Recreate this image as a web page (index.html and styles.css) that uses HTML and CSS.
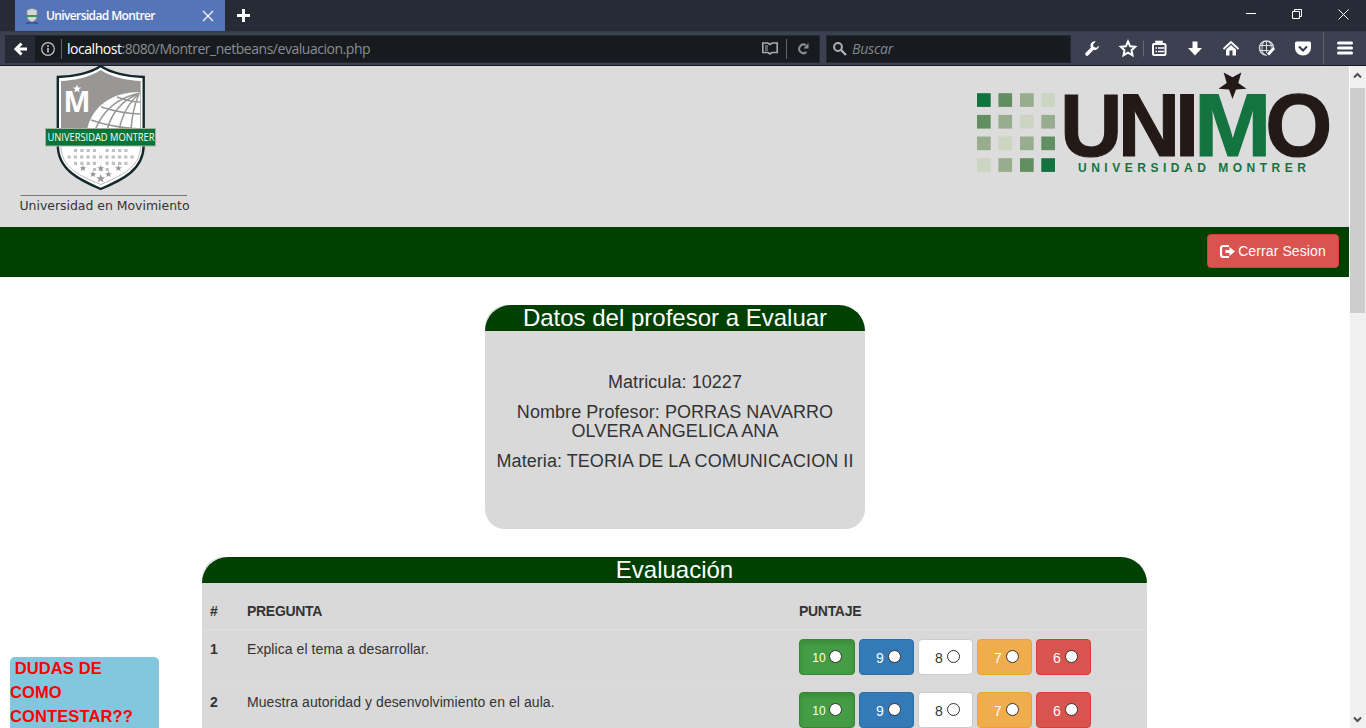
FILE: index.html
```html
<!DOCTYPE html>
<html lang="es">
<head>
<meta charset="utf-8">
<title>Universidad Montrer</title>
<link rel="stylesheet" href="styles.css">
</head>
<body>
<div class="tabbar">
  <div class="tab">
    <svg class="favicon" width="14" height="16" viewBox="0 0 14 16"><path d="M2 2l5-1.500L12 2v6c0 3-2 5-5 6-3-1-5-3-5-6z" fill="#d5d5d5" stroke="#888" stroke-width=".6"/><path d="M1 7h12v2H1z" fill="#2a9b55"/><path d="M1 15h12" stroke="#26406f" stroke-width="1"/></svg>
    <span class="tab-title">Universidad Montrer</span>
    <svg class="tab-close" width="12" height="12" viewBox="0 0 12 12"><path d="M1 1l10 10M11 1L1 11" stroke="#fff" stroke-width="1.200"/></svg>
  </div>
  <svg class="newtab" width="13" height="13" viewBox="0 0 13 13"><path d="M6.500 0v13M0 6.500h13" stroke="#fff" stroke-width="3"/></svg>
  <div class="window-controls">
    <svg width="10" height="11" viewBox="0 0 10 11"><path d="M0 4.500h10" stroke="#fff"/></svg>
    <svg width="10" height="11" viewBox="0 0 10 11"><path d="M.5 2.500h7v7h-7zM2.500 2.500v-2h7v7h-2" fill="none" stroke="#fff"/></svg>
    <svg width="11" height="11" viewBox="0 0 11 11"><path d="M.5.5l10 10M10.500.5l-10 10" stroke="#fff"/></svg>
  </div>
</div>
<div class="toolbar">
  <div class="urlbar">
    <div class="back"><svg width="13" height="14" viewBox="0 0 13 14"><path d="M7.500 1.500L2 7l5.500 5.500M2 7h11" fill="none" stroke="#fff" stroke-width="3"/></svg></div>
    <svg class="info" width="14" height="14" viewBox="0 0 14 14"><circle cx="7" cy="7" r="6.300" fill="none" stroke="#c8c8c8" stroke-width="1.200"/><path d="M7 6v4.500M7 3.300v1.600" stroke="#d5d5d5" stroke-width="1.500"/></svg>
    <span class="divider"></span>
    <span class="url"><b>localhost</b>:8080/Montrer_netbeans/evaluacion.php</span>
    <svg class="reader" width="16" height="13" viewBox="0 0 16 13"><path d="M.8 1h5L8 2.500 10.200 1h5v9.500H10L8 12l-2-1.500H.8z" fill="none" stroke="#a9aaac" stroke-width="1.600"/><path d="M3 4h3M3 6h3M3 8h3" stroke="#a9aaac"/></svg>
    <span class="divider reload-divider"></span>
    <svg class="reload" width="12" height="13" viewBox="0 0 12 13"><path d="M8.800 3.200A4.300 4.300 0 1 0 9.500 10" fill="none" stroke="#8e8f91" stroke-width="2"/><path d="M11.500 1v5.500H6.500z" fill="#8e8f91"/></svg>
  </div>
  <div class="search">
    <svg width="14" height="14" viewBox="0 0 14 14"><circle cx="5" cy="5" r="3.900" fill="none" stroke="#b0b1b3" stroke-width="2"/><path d="M8 8l5 5" stroke="#b0b1b3" stroke-width="2.400"/></svg>
    <span>Buscar</span>
  </div>
  <svg class="toolbar-icons" width="295" height="34" viewBox="1071 31.500 295 34">
    <path d="M1087 53.500l5-5" stroke="#fff" stroke-width="3.600" stroke-linecap="round"/><path d="M1095.800 41a4.300 4.300 0 1 0 3.200 4l-2.500 2.200-2.900-.8-.5-2.600z" fill="#fff"/>
    <path d="M1128 41l2.200 4.800 5 .5-3.700 3.500 1 5-4.500-2.600-4.500 2.600 1-5-3.700-3.500 5-.5z" fill="none" stroke="#fff" stroke-width="2"/>
    <path d="M1143.500 40v16" stroke="#656a77"/>
    <rect x="1153" y="43.500" width="12.500" height="11" rx="1" fill="none" stroke="#fff" stroke-width="2"/><path d="M1156 42.500h6v-1.500h-6z" stroke="#fff" stroke-width="1.600"/><path d="M1155.500 47.500h1.500m1 0h6M1155.500 51h1.500m1 0h6" stroke="#fff" stroke-width="1.500"/>
    <path d="M1192.500 41h5v6.500h4.500l-7 7.500-7-7.500h4.500z" fill="#fff"/>
    <path d="M1223.500 48.500l7.500-7 7.500 7" fill="none" stroke="#fff" stroke-width="1.800"/><path d="M1226 49l5-4.500 5 4.500v6h-3.500v-5h-3v5H1226z" fill="#fff"/>
    <circle cx="1266.500" cy="47.500" r="7" fill="none" stroke="#ddd" stroke-width="1.500"/><path d="M1266.500 41v14M1260 45h13M1260 50h13M1263.500 41.500c-2 5-2 8 0 12M1269.500 41.500c2 4 2 5 1.500 6" fill="none" stroke="#ddd"/><path d="M1267 55l7-7" stroke="#3b4150" stroke-width="4.500"/><path d="M1268 54l6-6.500" stroke="#fff" stroke-width="3"/>
    <path d="M1295 42.500q0-1.500 1.500-1.500h13q1.500 0 1.500 1.500v5a8 7.500 0 0 1-16 0z" fill="#fff"/><path d="M1299 46l4 4 4-4" fill="none" stroke="#343a48" stroke-width="2"/>
    <path d="M1323.500 32v32" stroke="#5d6370"/>
    <path d="M1338.500 42.500h13M1338.500 47.500h13M1338.500 52.500h13" stroke="#fff" stroke-width="3" stroke-linecap="round"/>
  </svg>
</div>
<div class="viewport">
  <main class="page">
    <header class="banner">
      <svg class="crest" width="174" height="148" viewBox="18 66 174 148">
        <path d="M100.700 66C91 73 72 77 57.800 77v68c0 25 22 35 42.900 44 21.300-9 43-19 43-44V77c-14.500 0-33.200-4-43-11z" fill="#fff" stroke="#14282c" stroke-width="2.400"/>
        <path d="M100.700 70C91 77 74 80.500 61 81v49h79.700V81c-13-.5-30-4-40-11z" fill="#999795"/>
        <path d="M87 130c4-21 22-38 53-38v38z" fill="#fff"/>
        <g fill="none" stroke="#999795" stroke-width="1.500"><path d="M95 130c7-17 20-32 45-37M107 130c4-15 14-29 31-36M119 130c3-14 8-26 20-36M131 130c1-16 4-27 8-36M101 107c13 4 25 7 39 7M91 120c14 5 30 8 49 9M117 97c8 3 15 5 23 5"/></g>
        <path d="M61 147c1 22 20 29 39.700 37.500C120 176 140 168 140.700 147" fill="none" stroke="#aaa" stroke-width=".8"/>
        <text class="crest-letter" x="63.500" y="112" textLength="27" lengthAdjust="spacingAndGlyphs">M</text>
        <path d="M77 84.500l1.100 3h3.200l-2.500 2 .9 3.100-2.700-1.800-2.700 1.800.9-3.100-2.500-2h3.200z" fill="#fff"/>
        <g stroke="#c0c0c0" stroke-width="3.200" stroke-dasharray="3.200 3.100"><path d="M74 150.500h22M105.500 150.500h22M67.500 157h67M74 163.300h22M105.500 163.300h22M93 169.500h16"/></g>
        <g fill="#999"><path id="small-star" d="M83 165l1 2.200h2.400l-1.900 1.500.7 2.400-2.200-1.400-2.200 1.400.7-2.400-1.900-1.500h2.400z"/><use href="#small-star" x="17.700"/><use href="#small-star" x="35.500"/><use href="#small-star" x="10" y="6"/><use href="#small-star" x="25.500" y="6"/><path d="M100.700 174l1.200 3.200h3.300l-2.600 2 1 3.200-2.900-1.900-2.900 1.900 1-3.200-2.600-2h3.300z"/></g>
        <rect x="45.500" y="128.500" width="110" height="17.500" fill="#087538" stroke="#a5b3a4"/>
        <text class="crest-band" x="47.500" y="141.300" textLength="107" lengthAdjust="spacingAndGlyphs">UNIVERSIDAD MONTRER</text>
        <path d="M20.500 195.500h166.500" stroke="#777" stroke-width="1.200"/>
        <text class="crest-motto" x="19.500" y="209.500" textLength="170" lengthAdjust="spacingAndGlyphs">Universidad en Movimiento</text>
      </svg>
      <svg class="unimo" width="356" height="104" viewBox="976 71 356 104">
        <g fill="#117440"><rect x="977" y="93.200" width="13.700" height="13.700"/><rect x="1041.300" y="158.200" width="13.700" height="13.700"/></g>
        <g fill="#628f62"><rect x="998.400" y="93.200" width="13.700" height="13.700"/><rect x="977" y="114.900" width="13.700" height="13.700"/><rect x="1041.300" y="136.500" width="13.700" height="13.700"/><rect x="1020" y="158.200" width="13.700" height="13.700"/></g>
        <g fill="#98ad8e"><rect x="1020" y="93.200" width="13.700" height="13.700"/><rect x="998.400" y="114.900" width="13.700" height="13.700"/><rect x="1041.300" y="114.900" width="13.700" height="13.700"/><rect x="977" y="136.500" width="13.700" height="13.700"/><rect x="1020" y="136.500" width="13.700" height="13.700"/><rect x="998.400" y="158.200" width="13.700" height="13.700"/></g>
        <g fill="#cbd5c2"><rect x="1041.300" y="93.200" width="13.700" height="13.700"/><rect x="1020" y="114.900" width="13.700" height="13.700"/><rect x="998.400" y="136.500" width="13.700" height="13.700"/><rect x="977" y="158.200" width="13.700" height="13.700"/></g>
        <g class="wordmark"><text x="1060" y="155.800" textLength="62.500" lengthAdjust="spacingAndGlyphs">U</text><text x="1117.700" y="155.800" textLength="62.500" lengthAdjust="spacingAndGlyphs">N</text><text x="1174.800" y="155.800">I</text><text class="wordmark-m" x="1194" y="155.800" textLength="77.500" lengthAdjust="spacingAndGlyphs">M</text><text x="1265.200" y="155.800" textLength="67" lengthAdjust="spacingAndGlyphs">O</text></g>
        <path d="M1232.500 99l-3.500-9.500-10.500-.7 8.200-5.800-3-10.500 8.800 4.800 8.800-4.800-3 10.500 8.200 5.800-10.500.7z" fill="#231a17"/>
        <text class="wordmark-sub" x="1078" y="171.700" textLength="228">UNIVERSIDAD MONTRER</text>
      </svg>
    </header>
    <nav class="navbar">
      <button class="logout"><svg width="15" height="13" viewBox="0 0 15 13"><path d="M9 1H3.500Q1 1 1 3.500v6Q1 12 3.500 12H9" fill="none" stroke="#fff" stroke-width="2.200"/><path d="M5.500 5h4V2L15 6.500 9.500 11V8h-4z" fill="#fff"/></svg>Cerrar Sesion</button>
    </nav>
    <section class="teacher">
      <h3 class="panel-title">Datos del profesor a Evaluar</h3>
      <h4>Matricula: 10227</h4>
      <h4>Nombre Profesor: PORRAS NAVARRO<br>OLVERA ANGELICA ANA</h4>
      <h4>Materia: TEORIA DE LA COMUNICACION II</h4>
    </section>
    <section class="evaluation">
      <h3 class="panel-title">Evaluación</h3>
      <div class="row head"><b>#</b><b>PREGUNTA</b><b>PUNTAJE</b></div>
      <div class="row">
        <b>1</b><span>Explica el tema a desarrollar.</span>
        <div class="scores"><label class="score s10">10<i></i></label><label class="score s9">9<i></i></label><label class="score s8">8<i></i></label><label class="score s7">7<i></i></label><label class="score s6">6<i></i></label></div>
      </div>
      <div class="row ruled">
        <b>2</b><span>Muestra autoridad y desenvolvimiento en el aula.</span>
        <div class="scores"><label class="score s10">10<i></i></label><label class="score s9">9<i></i></label><label class="score s8">8<i></i></label><label class="score s7">7<i></i></label><label class="score s6">6<i></i></label></div>
      </div>
    </section>
    <aside class="help">&nbsp;DUDAS DE<br>COMO<br>CONTESTAR??</aside>
  </main>
  <div class="scrollbar">
    <svg width="16" height="22" viewBox="0 0 16 22"><path d="M4 11.500L7.500 8l3.500 3.500" fill="none" stroke="#505050" stroke-width="2"/></svg>
    <div class="thumb"></div>
    <svg class="scroll-down" width="16" height="17" viewBox="0 0 16 17"><path d="M4 6.500L7.500 10 11 6.500" fill="none" stroke="#505050" stroke-width="2"/></svg>
  </div>
</div>
</body>
</html>
```
FILE: styles.css
```css
* { box-sizing: border-box; }
body {
  margin: 0;
  width: 1366px;
  height: 728px;
  overflow: hidden;
  display: flex;
  flex-direction: column;
  font-family: "Liberation Sans", Arial, sans-serif;
  font-size: 14px;
  line-height: 20px;
  color: #333;
}
svg { display: block; flex: none; overflow: visible; }

.tabbar {
  height: 31px;
  flex: none;
  display: flex;
  align-items: center;
  padding-left: 15px;
  background: #272b35;
}
.tab {
  width: 210px;
  height: 31px;
  display: flex;
  align-items: center;
  padding: 0 11px 0 10px;
  background: #5675b9;
  color: #fff;
  font: 600 12px "Open Sans", "Noto Sans", sans-serif;
}
.tab-title { margin-left: 7px; letter-spacing: -0.62px; white-space: nowrap; }
.tab-close { margin-left: auto; }
.newtab { margin-left: 12px; }
.window-controls { margin-left: auto; display: flex; gap: 36px; padding: 0 17px 3px 0; }

.toolbar {
  height: 35px;
  flex: none;
  display: flex;
  align-items: center;
  padding-left: 5px;
  background: #3b4150;
  border-top: 1px solid #343946;
  border-bottom: 1px solid #191c25;
  font-family: "Open Sans", "Noto Sans", sans-serif;
}
.urlbar, .search {
  height: 28px;
  display: flex;
  align-items: center;
  background: #171b1f;
  border: 1px solid #242933;
}
.urlbar { width: 815px; }
.back { width: 29px; height: 26px; padding: 6px 0 0 8px; background: #252b34; }
.info { margin-left: 6px; }
.divider { width: 1px; height: 20px; margin-left: 6px; background: #62666c; }
.url { margin-left: 5px; font-size: 14px; letter-spacing: -0.47px; color: #8b8d90; white-space: nowrap; }
.url b { font-weight: 400; color: #fff; }
.reader { margin-left: auto; }
.reload-divider { margin-left: 8px; }
.reload { margin: 0 10px; }
.search {
  width: 245px;
  margin-left: 6px;
  padding-left: 6px;
  gap: 5px;
  font-size: 14px;
  font-style: italic;
  letter-spacing: -0.2px;
  color: #85878a;
}

.viewport { height: 662px; flex: none; display: flex; }
.page { width: 1349px; height: 662px; overflow: hidden; position: relative; background: #fff; }
.scrollbar { width: 17px; display: flex; flex-direction: column; border-left: 1px solid #fff; background: #f0f0f0; }
.thumb { width: 15px; height: 225px; background: #cdcdcd; }
.scroll-down { margin-top: auto; }

.banner { height: 161px; display: flex; justify-content: space-between; padding: 0 17px 0 18px; background: #dcdcdc; }
.unimo { margin-top: 5px; }
.crest-letter { font: bold 28px "Open Sans", sans-serif; fill: #fff; }
.crest-band { font: 11.500px "Open Sans", sans-serif; fill: #fff; }
.crest-motto { font: 13px "DejaVu Sans", sans-serif; fill: #333; }
.wordmark { font: bold 88.500px "Liberation Sans", sans-serif; fill: #231a17; stroke: #231a17; stroke-width: 1.1px; }
.wordmark-m { fill: #137440; stroke: #137440; }
.wordmark-sub { font: bold 12px "Liberation Sans", sans-serif; fill: #137440; }

.navbar { height: 50px; display: flex; justify-content: flex-end; padding: 7px 10px; background: #004000; }
.logout {
  width: 132px;
  height: 34px;
  display: flex;
  align-items: center;
  justify-content: center;
  gap: 3px;
  padding: 0;
  border: 1px solid #d43f3a;
  border-radius: 4px;
  background: #d9534f;
  color: #fff;
  font: 14px "Liberation Sans", Arial, sans-serif;
  letter-spacing: 0.1px;
  white-space: nowrap;
}

h3, h4 { margin: 0; font-weight: 400; text-align: center; }
.panel-title {
  height: 26px;
  border-radius: 26px 26px 0 0;
  background: #004000;
  color: #fff;
  font-size: 24px;
  line-height: 26px;
}
.teacher { width: 380px; height: 224px; margin: 28px 0 0 485px; border-radius: 22px 30px 20px 20px; background: #d9d9d9; }
.teacher h4 { margin-bottom: 11px; font-size: 18px; line-height: 19px; letter-spacing: 0.06px; }
.teacher .panel-title { margin-bottom: 42px; }

.evaluation { width: 945px; margin: 28px 0 0 202px; border-radius: 22px 30px 0 0; background: #d9d9d9; }
.row { display: grid; grid-template-columns: 37px 552px 1fr; padding: 8px; align-items: start; letter-spacing: 0.07px; }
.head { margin-top: 10px; border-bottom: 2px solid #ddd; letter-spacing: -0.3px; }
.ruled { border-top: 1px solid #ddd; }
.scores { display: flex; gap: 4px; }
.score {
  width: 55px;
  height: 36px;
  display: flex;
  align-items: center;
  justify-content: center;
  gap: 4px;
  padding: 2px 0 0 4px;
  border: 1px solid;
  border-radius: 4px;
  color: #fff;
}
.score i { width: 13px; height: 13px; margin-top: -3px; border: 1px solid #333; border-radius: 50%; background: #fff; }
.s10 { width: 56px; gap: 3px; padding-left: 0; font-size: 12px; background: #449d44; border-color: #398439; box-shadow: inset 0 3px 5px rgba(0, 0, 0, 0.125); }
.s9 { background: #337ab7; border-color: #2e6da4; }
.s8 { background: #fff; border-color: #ccc; color: #333; }
.s7 { background: #f0ad4e; border-color: #eea236; }
.s6 { background: #d9534f; border-color: #d43f3a; }

/* Help box stays pinned to the lower left of the page */
.help {
  position: absolute;
  left: 10px;
  top: 591px;
  width: 149px;
  height: 80px;
  border-radius: 5px;
  background: #83c7df;
  color: #f00;
  font-size: 16.500px;
  font-weight: bold;
  line-height: 24px;
  letter-spacing: 0.12px;
  text-indent: 0;
}
.help::before { content: ""; display: block; margin-bottom: -1px; }
```
